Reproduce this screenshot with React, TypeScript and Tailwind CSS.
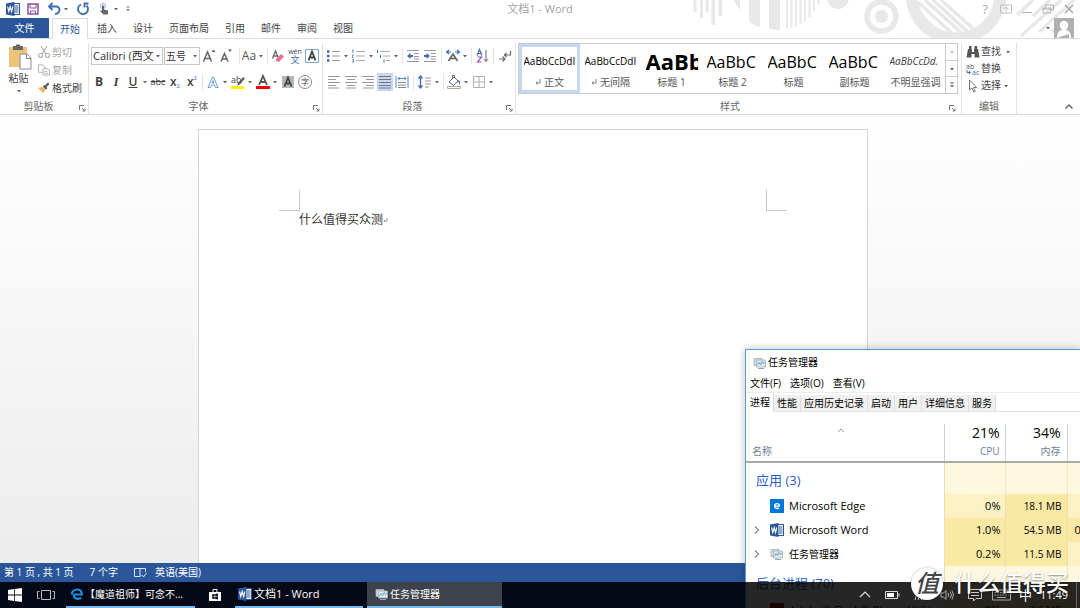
import type { ReactNode } from "react";
import clsx from "clsx";

const menuTabs = ["插入", "设计", "页面布局", "引用", "邮件", "审阅", "视图"];

const styleItems = [
  { name: "正文", sample: "AaBbCcDdI", mark: true, selected: true, look: "text-[10px] text-black" },
  { name: "无间隔", sample: "AaBbCcDdI", mark: true, look: "text-[10px] text-black" },
  { name: "标题 1", sample: "AaBb", look: "text-[22px] font-bold text-black" },
  { name: "标题 2", sample: "AaBbC", look: "text-base text-black" },
  { name: "标题", sample: "AaBbC", look: "text-base text-black" },
  { name: "副标题", sample: "AaBbC", look: "text-base text-black" },
  { name: "不明显强调", sample: "AaBbCcDd.", look: "text-[10px] italic text-[#404040]" },
];

const taskTabs = ["进程", "性能", "应用历史记录", "启动", "用户", "详细信息", "服务"];

const processes = [
  { name: "Microsoft Edge", icon: <EdgeTile />, cpu: "0%", mem: "18.1 MB", disk: "", expand: false, hot: false, diskHot: false },
  { name: "Microsoft Word", icon: <WordIcon />, cpu: "1.0%", mem: "54.5 MB", disk: "0", expand: true, hot: true, diskHot: true },
  { name: "任务管理器", cjk: true, icon: <TaskIcon />, cpu: "0.2%", mem: "11.5 MB", disk: "", expand: true, hot: true, diskHot: false },
];

function WordIcon() {
  return (
    <svg width="14" height="14" viewBox="0 0 14 14" className="shrink-0">
      <rect x="7" y="1.5" width="6.5" height="11" fill="#fff" stroke="#2b579a" />
      <path d="M9 4h3.5M9 6h3.5M9 8h3.5M9 10h3.5" stroke="#2b579a" />
      <path d="M0 1.5L8.5 0v14L0 12.5z" fill="#2b579a" />
      <path d="M1.6 4.5l1.2 5 1.4-5 1.4 5 1.2-5" fill="none" stroke="#fff" strokeWidth="1.1" />
    </svg>
  );
}

function TaskIcon() {
  return (
    <svg width="13" height="12" viewBox="0 0 13 12" className="shrink-0">
      <path d="M1 1.5h8v7H1z" fill="#d5dade" stroke="#a3abb0" strokeWidth=".8" />
      <path d="M3.5 3h9v7h-9z" fill="#dcebf5" stroke="#a3abb0" strokeWidth=".8" />
      <path d="M4.5 8l1.5-2.5 1.5 2 1.7-3 1.3 2 1.3-1" fill="none" stroke="#5a9fcb" strokeWidth="1" />
      <path d="M5 11.5h6" stroke="#9aa3a8" />
    </svg>
  );
}

function EdgeTile() {
  return (
    <svg width="14" height="14" viewBox="0 0 14 14" className="shrink-0">
      <rect width="14" height="14" fill="#0078d7" />
      <path d="M4.8 7.1h4.600C9.400 5.400 8.400 4.600 7.100 4.600 5.700 4.600 4.600 5.600 4.600 7.100c0 1.600 1.100 2.400 2.600 2.400.8 0 1.400-.2 2-.5" fill="none" stroke="#fff" strokeWidth="1.300" />
    </svg>
  );
}

function Arrow({ className }: { className?: string }) {
  return (
    <svg width="8" height="6" viewBox="0 0 8 6" className={clsx("shrink-0", className)}>
      <path d="M2 2h4L4 4.500z" fill="#666" />
    </svg>
  );
}

function Icon({ children }: { children: ReactNode }) {
  return (
    <svg width="16" height="16" viewBox="0 0 16 16" fill="none" stroke="#666" className="shrink-0">
      {children}
    </svg>
  );
}

function Tool({ label, drop, active, children }: { label: string; drop?: boolean; active?: boolean; children: ReactNode }) {
  return (
    <button
      type="button"
      aria-label={label}
      className={clsx("flex h-[18px] shrink-0 items-center justify-center", drop ? "w-6" : "w-4", active && "bg-[#c5d7f2]")}
    >
      <span className="flex w-4 shrink-0 items-center justify-center">{children}</span>
      {drop && <Arrow />}
    </button>
  );
}

function Sep({ className }: { className?: string }) {
  return <span className={clsx("h-4 w-px shrink-0 bg-[#e4e4e4]", className ?? "mx-px")} />;
}

function Group({ title, className, launcher, children }: { title: string; className?: string; launcher?: boolean; children: ReactNode }) {
  return (
    <section className={clsx("flex shrink-0 flex-col border-r border-[#e2e2e2]", className)}>
      <div className="h-[54px]">{children}</div>
      <div
        className={clsx(
          "relative flex h-[17px] items-end justify-center text-[10px] leading-[15px] text-[#666]",
          launcher ? "pr-4" : "pr-1"
        )}
      >
        {title}
        {launcher && (
          <button type="button" aria-label={`${title}设置`} className="absolute right-0.5 bottom-0.5">
            <svg width="7" height="7" viewBox="0 0 7 7" fill="none" stroke="#777">
              <path d="M.5 5V.5H5M3 3l2.500 2.500M6 3.500V6H3.500" />
            </svg>
          </button>
        )}
      </div>
    </section>
  );
}

function TopArt() {
  return (
    <svg className="pointer-events-none absolute top-0 right-0" width="390" height="39" viewBox="690 0 390 39" fill="#e8e8e8">
      <path d="M693.500 0h3v12h-3zM700 0h3v18h-3zM705.500 0h3v12h-3zM711.500 0h3.500v25h-3.500zM718.500 0h3.500v16h-3.500z" />
      <path d="M734 0h6v10q-4-4-6-10zM749 0h11v27q-8-2-11-6zM769 0h11v30q-7 0-11-2z" />
      <path d="M786 0h2v28.500h-2zM790.500 0h2v28h-2zM795 0h2v26.500h-2zM799.500 0h2v24.500h-2zM804 0h2v21h-2zM808.500 0h2v17h-2zM813 0h2v11h-2zM817.500 0h2v4h-2z" />
      <circle cx="838" cy="-2" r="11" />
      <circle cx="881.500" cy="16.500" r="14.500" fill="none" stroke="#e8e8e8" strokeWidth="5.500" />
      <circle cx="881.500" cy="16.500" r="6.500" />
      <circle cx="956" cy="-6" r="44.500" fill="none" stroke="#e8e8e8" strokeWidth="12" />
      <path d="M918 2l40 37M925 0l40 36M933 0l37 34M941 0l36 32M917 12l27 25" fill="none" stroke="#e8e8e8" strokeWidth="3.500" />
      <path d="M1017 15l16-15M1021 36l40-36M1033 16l17-16M1039 32l35-32M1052 32l12-11" fill="none" stroke="#e8e8e8" strokeWidth="3.500" />
    </svg>
  );
}

function TitleBar() {
  return (
    <div className="relative flex h-[18px] items-center justify-between pr-[3px]">
      <div className="flex items-center gap-[5px] pl-1.5">
        <WordIcon />
        <Tool label="保存">
          <Icon>
            <path d="M3 3h10v10H3z" stroke="#8a4fa3" strokeWidth="1.500" />
            <path d="M5 3v4h6V3M5.500 13v-3h5v3" stroke="#8a4fa3" />
          </Icon>
        </Tool>
        <Tool label="撤消" drop>
          <Icon>
            <path d="M6.500 2L3 5.500 6.500 9M3 5.500h7c5 0 4.500 7-1 7.500" stroke="#3a6db5" strokeWidth="1.800" />
          </Icon>
        </Tool>
        <Tool label="恢复">
          <Icon>
            <path d="M6 3.500A5 5 0 1 0 11.500 4.500M13.500 2.500h-4v4" stroke="#3a6db5" strokeWidth="1.800" />
          </Icon>
        </Tool>
        <div className="flex items-center gap-1">
          <Tool label="触摸模式" drop>
            <Icon>
              <circle cx="7" cy="5" r="2.500" stroke="#8ab0de" />
              <path d="M6 4.500h2v4l4 1v4H7.500L4 10l2-.500z" fill="#666" stroke="none" />
            </Icon>
          </Tool>
          <button type="button" aria-label="自定义快速访问工具栏">
            <svg width="8" height="8" viewBox="0 0 8 8">
              <path d="M2 2h4" stroke="#888" />
              <path d="M2 4h4L4 6.500z" fill="#888" />
            </svg>
          </button>
        </div>
      </div>
      <h1 className="absolute inset-x-0 text-center text-[11px] leading-[18px] text-[#a3a3a3]">文档1 - Word</h1>
      <div className="relative flex items-center gap-[5px] text-[#a8a8a8]">
        <button type="button" className="w-4 text-[13px] leading-4">?</button>
        <button type="button" aria-label="功能区显示选项">
          <Icon>
            <path d="M2.500 4h11v8h-11zM8 11V6.500M5.500 8.500L8 6l2.500 2.500" stroke="#c0c0c0" />
          </Icon>
        </button>
        <button type="button" aria-label="最小化">
          <Icon><path d="M3 11.500h10" stroke="#b0b0b0" /></Icon>
        </button>
        <button type="button" aria-label="还原">
          <Icon><path d="M5.500 6V4h8v5H11M3 7h8v5H3zM3 8h8" stroke="#b0b0b0" /></Icon>
        </button>
        <button type="button" aria-label="关闭">
          <Icon><path d="M4 4l8 8M12 4l-8 8" stroke="#a8a8a8" strokeWidth="1.500" /></Icon>
        </button>
      </div>
    </div>
  );
}

function MenuTabs() {
  return (
    <nav className="relative flex h-[21px] items-stretch gap-px border-b border-[#dcdcdc] text-[10px] text-[#444]">
      <button type="button" className="w-[49px] bg-[#2b579a] text-white">文件</button>
      <button type="button" className="-mb-px ml-0.5 border border-b-0 border-[#dcdcdc] bg-white px-[7px] text-[#2b579a]">开始</button>
      <div className="flex">
        {menuTabs.map((tab) => (
          <button key={tab} type="button" className="px-2">{tab}</button>
        ))}
      </div>
      <button type="button" aria-label="帐户" className="mr-1.5 ml-auto flex items-center gap-0.5">
        <Arrow />
        <svg width="20" height="20" viewBox="0 0 20 20">
          <rect width="20" height="20" fill="#b0b0b0" />
          <path d="M10 3c3 0 4.200 2 4.200 4.500S12.500 12 10 12 5.800 10 5.800 7.500 7 3 10 3z" fill="#fff" />
          <path d="M3 20c0-5 2-7.500 5-8h4c3 .5 5 3 5 8h-2v-4M5 20v-4" fill="#fff" />
        </svg>
      </button>
    </nav>
  );
}

function Clipboard() {
  return (
    <Group title="剪贴板" launcher className="w-[89px] pl-[5px]">
      <div className="flex gap-1.5 text-[10px] leading-[18px]">
        <button type="button" className="flex w-[27px] flex-col items-center text-[#444]">
          <svg width="26" height="27" viewBox="0 0 26 27">
            <rect x="3" y="4" width="18" height="20" fill="#ecc57b" />
            <path d="M7 3h3V1.500h4V3h3v4H7z" fill="#666" />
            <path d="M14 11h7l4 4v11H14z" fill="#fff" stroke="#8a8a8a" />
            <path d="M20.500 11v4.500H25" fill="none" stroke="#8a8a8a" />
          </svg>
          <span className="leading-4">粘贴</span>
          <Arrow className="mt-0.5" />
        </button>
        <div className="flex flex-col text-[#a6a6a6]">
          <button type="button" className="flex h-[18px] items-center gap-0.5">
            <svg width="12" height="14" viewBox="1 0 12 14" fill="none" stroke="#adadad" strokeWidth="1.200">
              <path d="M4 1l5 8M10 1L5 9" />
              <circle cx="3.500" cy="10.500" r="2" />
              <circle cx="10.500" cy="10.500" r="2" />
            </svg>
            剪切
          </button>
          <button type="button" className="flex h-[18px] items-center gap-0.5">
            <svg width="12" height="14" viewBox="0 0 13 14" fill="#fff" stroke="#adadad">
              <path d="M.5 1.500h5l2 2v6h-7z" />
              <path d="M5.500 5.500h5l2 2v5h-7zM7 8.500h3M7 10.500h4" />
            </svg>
            复制
          </button>
          <button type="button" className="flex h-[18px] items-center gap-0.5 text-[#444]">
            <svg width="12" height="14" viewBox="0 0 14 14">
              <path d="M0 7l5-1.500L8.500 9 6 13z" fill="#ecb561" />
              <path d="M5.500 5l2-1.500L11 7 9 9z" fill="#555" />
              <path d="M9 5l3.500-3.500" stroke="#555" strokeWidth="2.500" />
            </svg>
            格式刷
          </button>
        </div>
      </div>
    </Group>
  );
}

function FontGroup() {
  return (
    <Group title="字体" launcher className="w-[234px] pl-0.5">
      <div className="flex h-[26px] items-center gap-px">
        <span className="relative flex w-[72px] items-center border border-[#c6c6c6]">
          <select aria-label="字体" className="h-4 w-full appearance-none overflow-hidden bg-white pl-px text-[11px] leading-4 text-[#333]">
            <option>Calibri (西文正文)</option>
          </select>
          <Arrow className="pointer-events-none absolute right-0 h-3.5 bg-white" />
        </span>
        <span className="relative flex w-9 items-center border border-[#c6c6c6]">
          <select aria-label="字号" className="h-4 w-full appearance-none bg-white pl-px text-[10px] leading-4 text-[#333]">
            <option>五号</option>
          </select>
          <Arrow className="pointer-events-none absolute right-0" />
        </span>
        <Tool label="增大字号">
          <Icon>
            <path d="M2.500 13.500L6.500 4l4 9.500M4 10.500h5" strokeWidth="1.600" />
            <path d="M10.500 4h4L12.500 1.500z" fill="#3a6db5" stroke="none" />
          </Icon>
        </Tool>
        <Tool label="减小字号">
          <Icon>
            <path d="M3 13.500L6.500 5.500l3.500 8M4 11h5" strokeWidth="1.500" />
            <path d="M10 1.500h4L12 4z" fill="#3a6db5" stroke="none" />
          </Icon>
        </Tool>
        <Sep className="ml-1" />
        <Tool label="更改大小写" drop><span className="text-xs text-[#555]">Aa</span></Tool>
        <Sep />
        <Tool label="清除格式">
          <Icon>
            <path d="M2.500 10.500L5.500 3l3 7M3.500 8h4" strokeWidth="1.300" />
            <path d="M6 11l5-5 3 2.500-5 5.500-3-1z" fill="#e8718a" stroke="none" />
          </Icon>
        </Tool>
        <Tool label="拼音指南">
          <span className="flex flex-col items-center text-[9px] leading-[9px] text-[#444]">
            <span className="text-[7px] leading-[7px]">wén</span>
            <span className="text-[#3a6db5]">文</span>
          </span>
        </Tool>
        <Tool label="字符边框">
          <Icon>
            <path d="M1.500 1.500h13v13h-13z" stroke="#7fa6d8" />
            <path d="M4.500 12.500L8 3.500l3.500 9M5.500 9.500h5" stroke="#444" strokeWidth="1.800" />
          </Icon>
        </Tool>
      </div>
      <div className="flex h-[26px] items-center gap-px text-[#444]">
        <Tool label="加粗"><span className="text-xs font-bold">B</span></Tool>
        <Tool label="倾斜"><span className="font-['Liberation_Serif',serif] text-[13px] font-bold italic">I</span></Tool>
        <Tool label="下划线" drop><span className="text-xs font-semibold underline">U</span></Tool>
        <Tool label="删除线"><span className="text-[9px] line-through">abc</span></Tool>
        <Tool label="下标">
          <span className="text-xs font-semibold">x</span>
          <span className="self-end text-[6px] leading-[8px] text-[#3a6db5]">2</span>
        </Tool>
        <Tool label="上标">
          <span className="text-xs font-semibold">x</span>
          <span className="self-start text-[6px] leading-[8px] text-[#3a6db5]">2</span>
        </Tool>
        <Sep />
        <Tool label="文本效果" drop>
          <Icon>
            <path d="M3 13.500L7.500 3h1L13 13.500h-2.500l-1-2.500h-3l-1 2.500zM7 9h2L8 6.500z" stroke="#6f9fd8" />
          </Icon>
        </Tool>
        <Tool label="突出显示" drop>
          <svg width="16" height="16" viewBox="0 0 16 16">
            <path d="M8 9l5-6 2 1.500-5 6-3 1z" fill="#666" />
            <text x="1" y="9" fontSize="9" fill="#444">ab</text>
            <path d="M1 12h13v3H1z" fill="#ffef00" />
          </svg>
        </Tool>
        <Tool label="字体颜色" drop>
          <Icon>
            <path d="M4 11L8 2l4 9M5.500 8h5" stroke="#555" strokeWidth="1.800" />
            <path d="M1 12h14v3H1z" fill="#f00000" stroke="none" />
          </Icon>
        </Tool>
        <Tool label="字符底纹">
          <Icon>
            <path d="M2 2h12v12H2z" fill="#b5b5b5" stroke="none" />
            <path d="M4.500 12.500L8 3.500l3.500 9M5.500 9.500h5" stroke="#444" strokeWidth="1.800" />
          </Icon>
        </Tool>
        <Tool label="带圈字符">
          <span className="flex h-3.5 w-3.5 shrink-0 items-center justify-center rounded-full border border-[#888] text-[8px] leading-none">字</span>
        </Tool>
      </div>
    </Group>
  );
}

function ParagraphGroup() {
  return (
    <Group title="段落" launcher className="w-[193px] pl-[3px]">
      <div className="flex h-[26px] items-center gap-px">
        <Tool label="项目符号" drop>
          <Icon>
            <path d="M1 3.500h2.500M1 8h2.500M1 12.500h2.500" stroke="#3a6db5" strokeWidth="2.500" />
            <path d="M6 3.500h8M6 8h8M6 12.500h8" stroke="#999" />
          </Icon>
        </Tool>
        <Tool label="编号" drop>
          <Icon>
            <path d="M1 2.500l1-.5v3M1 7h1.500L1 9.500h1.500M1 11.500h1.500V14H1" stroke="#3a6db5" strokeWidth=".8" />
            <path d="M5 3.500h9M5 8h9M5 12.500h9" stroke="#aaa" />
          </Icon>
        </Tool>
        <Tool label="多级列表" drop>
          <Icon>
            <path d="M1.500 2v3M4.500 7v3M8 11.500v3" stroke="#3a6db5" />
            <path d="M4 3.500h10M7 8h7M10 12.500h4" stroke="#aaa" />
          </Icon>
        </Tool>
        <Sep />
        <Tool label="减少缩进">
          <Icon>
            <path d="M2 2.500h12M9 5.500h5M9 8.500h5M2 13.500h12M9 11h5" stroke="#999" />
            <path d="M2 8l3.500-3v2H8v2H5.500v2z" fill="#3a6db5" stroke="none" />
          </Icon>
        </Tool>
        <Tool label="增加缩进">
          <Icon>
            <path d="M2 2.500h12M9 5.500h5M9 8.500h5M2 13.500h12M9 11h5" stroke="#999" />
            <path d="M8 8L4.500 5v2H2v2h2.500v2z" fill="#3a6db5" stroke="none" />
          </Icon>
        </Tool>
        <Sep className="mx-0.5" />
        <Tool label="中文版式" drop>
          <Icon>
            <path d="M3.500 13L8 6l4.500 7M5 10.500h6" strokeWidth="1.600" />
            <path d="M1.500 4H6M4 2L1.500 4 4 6M14.500 4H10M12 2l2.500 2L12 6" stroke="#3a6db5" strokeWidth="1.200" />
          </Icon>
        </Tool>
        <Sep />
        <Tool label="排序">
          <Icon>
            <path d="M3 7.500L5.500 1.500l2.500 6M4 5.500h3" stroke="#3a6db5" strokeWidth="1.200" />
            <path d="M3.500 9h4l-4 5h4" stroke="#8a4fa3" strokeWidth="1.200" />
            <path d="M12 2v11.500M9.800 11l2.200 2.500 2.200-2.500" />
          </Icon>
        </Tool>
        <Sep className="mx-0.5" />
        <Tool label="显示编辑标记">
          <Icon>
            <path d="M13.500 3v4H7.500M9.500 5l-2 2 2 2M2 11h6M5.500 8.500L8 11l-2.500 2.500" strokeWidth="1.200" />
          </Icon>
        </Tool>
      </div>
      <div className="flex h-[26px] items-center gap-px">
        <Tool label="左对齐">
          <Icon><path d="M2 2.500h12M2 5.500h8M2 8.500h12M2 11.500h8M2 14h11" stroke="#999" /></Icon>
        </Tool>
        <Tool label="居中">
          <Icon><path d="M2 2.500h12M4 5.500h8M2 8.500h12M4 11.500h8M3 14h10" stroke="#999" /></Icon>
        </Tool>
        <Tool label="右对齐">
          <Icon><path d="M2 2.500h12M6 5.500h8M2 8.500h12M6 11.500h8M3 14h11" stroke="#999" /></Icon>
        </Tool>
        <Tool label="两端对齐" active>
          <Icon><path d="M2 2.500h12M2 5.500h12M2 8.500h12M2 11.500h12M2 14h12" stroke="#777" /></Icon>
        </Tool>
        <Tool label="分散对齐">
          <Icon>
            <path d="M4 8.500h8M4 11h8M4 13.500h8" stroke="#888" />
            <path d="M2 2v12M14 2v12M4 4.500h8M6 2.500l-2 2 2 2M10 2.500l2 2-2 2" stroke="#5b8ac7" />
          </Icon>
        </Tool>
        <Sep className="mx-0.5" />
        <Tool label="行距" drop>
          <Icon>
            <path d="M3.500 2v12M1.500 4.500l2-2.500 2 2.500M1.500 11.500l2 2.500 2-2.500" stroke="#3a6db5" strokeWidth="1.300" />
            <path d="M8 4h6M8 7h6M8 10h6M8 13h4" stroke="#999" />
          </Icon>
        </Tool>
        <Sep />
        <Tool label="底纹" drop>
          <Icon>
            <path d="M3 8l5-5 4 4-4.500 4.500zM6.500 5V1.500h2V4" />
            <path d="M12 6c2 .5 2.500 2 2 4.500-1-.5-1.500-2-2-4.500z" fill="#3a6db5" stroke="none" />
            <path d="M1.500 12.500h13v2h-13z" fill="#fff" stroke="#aaa" />
          </Icon>
        </Tool>
        <Tool label="边框" drop>
          <Icon><path d="M2.500 2.500h11v11h-11zM8 2.500v11M2.500 8h11" stroke="#b0b0b0" /></Icon>
        </Tool>
      </div>
    </Group>
  );
}

function StylesGroup() {
  return (
    <Group title="样式" launcher className="min-w-0 flex-1 pr-[3px] pl-0.5">
      <div className="flex h-[51px] border border-[#c9c9c9] bg-white">
        <div className="flex min-w-0 flex-1 overflow-hidden">
          {styleItems.map((item) => (
            <button
              key={item.name}
              type="button"
              className={clsx(
                "flex w-[61px] shrink-0 flex-col items-center border-[3px]",
                item.selected ? "border-[#c5d7f2]" : "border-transparent"
              )}
            >
              <span className={clsx("flex h-[29px] w-[52px] items-center overflow-hidden whitespace-nowrap", item.look)}>
                {item.sample}
              </span>
              <span className="flex h-3 items-center gap-[3px] text-[10px] leading-3 whitespace-nowrap text-[#555]">
                {item.mark && (
                  <svg width="6" height="6" viewBox="0 0 6 6" fill="none" stroke="#666">
                    <path d="M5 0v4H1M2.500 2.500L1 4l1.500 1.500" strokeWidth=".8" />
                  </svg>
                )}
                {item.name}
              </span>
            </button>
          ))}
        </div>
        <div className="flex w-3 flex-col divide-y divide-[#c9c9c9] border-l border-[#c9c9c9]">
          <button type="button" aria-label="上一行" className="flex flex-1 items-center justify-center">
            <Arrow className="rotate-180 opacity-50" />
          </button>
          <button type="button" aria-label="下一行" className="flex flex-1 items-center justify-center"><Arrow /></button>
          <button type="button" aria-label="其他" className="flex flex-1 items-center justify-center">
            <svg width="8" height="8" viewBox="0 0 8 8">
              <path d="M2 2h4" stroke="#666" />
              <path d="M2 4h4L4 6.500z" fill="#666" />
            </svg>
          </button>
        </div>
      </div>
    </Group>
  );
}

function EditGroup() {
  return (
    <Group title="编辑" className="w-[55px] pl-1">
      <div className="flex flex-col text-[10px] leading-[17px] text-[#444]">
        <button type="button" className="flex h-[17px] items-center gap-px">
          <svg width="14" height="14" viewBox="0 0 14 14" fill="#555">
            <path d="M3 1h2.500v3H3zM8.500 1H11v3H8.500zM2 4h4v3h2V4h4l1.500 8.500H8.500V9h-3v3.500H.5z" />
          </svg>
          查找
          <Arrow className="ml-0.5" />
        </button>
        <button type="button" className="flex h-[17px] items-center gap-px">
          <svg width="14" height="14" viewBox="0 0 14 14">
            <text x="0" y="7" fontSize="7" fill="#555">ab</text>
            <text x="6" y="13" fontSize="7" fill="#3a6db5">ac</text>
            <path d="M1 8v2.500h3M3 9l1.500 1.500L3 12" fill="none" stroke="#3a6db5" />
          </svg>
          替换
        </button>
        <button type="button" className="flex h-[17px] items-center gap-px">
          <svg width="14" height="14" viewBox="0 0 14 14">
            <path d="M3.500 1v10l2.500-2 1.800 4 1.500-.7-1.800-3.800h3.200z" fill="#fff" stroke="#777" />
          </svg>
          选择
          <Arrow />
        </button>
      </div>
    </Group>
  );
}

function TaskManager() {
  return (
    <aside className="absolute top-[349px] right-0 bottom-0 w-[335px] overflow-hidden border-t border-l border-[#5a9bd0] bg-white text-black shadow-[0_0_8px_rgba(0,0,0,0.25)]">
      <h2 className="flex h-[25px] items-center gap-0.5 pl-[7px] text-[10px]">
        <TaskIcon />
        任务管理器
      </h2>
      <div className="flex h-[18px] items-center gap-[9px] border-b border-[#ededed] pl-1 text-[10px]">
        <button type="button">文件(F)</button>
        <button type="button">选项(O)</button>
        <button type="button">查看(V)</button>
      </div>
      <div className="flex h-[19px] border-b border-[#e3e3e3] text-[10px]">
        {taskTabs.map((tab, i) => (
          <button
            key={tab}
            type="button"
            className={clsx("border-r border-[#dedede] px-[3px]", i === 0 ? "-mb-px bg-white pl-1" : "mt-0.5 bg-[#f0f0f0]")}
          >
            {tab}
          </button>
        ))}
      </div>
      <table className="mt-3 w-full table-fixed border-collapse text-[11px]">
        <thead>
          <tr className="h-[38px] border-b-2 border-[#a9a9a9] font-normal text-[#6d7f95]">
            <th className="relative w-[198px] border-r border-[#d0d0d0] pl-1.5 text-left align-bottom text-[10px] font-normal">
              <svg width="8" height="5" viewBox="0 0 8 5" fill="none" stroke="#999" className="absolute top-1 right-1/2">
                <path d="M1 4l3-3 3 3" />
              </svg>
              <span className="leading-5">名称</span>
            </th>
            <th className="w-[61px] border-r border-[#d0d0d0] pr-[5px] text-right align-bottom font-normal">
              <span className="block text-sm leading-[17px] text-black">21%</span>
              <span className="block text-[10px] leading-5">CPU</span>
            </th>
            <th className="w-[62px] border-r border-[#d0d0d0] pr-1.5 text-right align-bottom font-normal">
              <span className="block text-sm leading-[17px] text-black">34%</span>
              <span className="block text-[10px] leading-5">内存</span>
            </th>
            <th />
          </tr>
        </thead>
        <tbody>
          <GroupRow title="应用 (3)" />
          {processes.map((p) => (
            <tr key={p.name} className="h-6">
              <td className="border-r border-[#eedfa6]">
                <div className="flex items-center gap-[5px] pl-[7px]">
                  <svg width="12" height="10" viewBox="0 0 12 10" fill="none" stroke="#888">
                    {p.expand && <path d="M2 1.500L5.500 5 2 8.500" strokeWidth="1.200" />}
                  </svg>
                  <span className="w-3.5">{p.icon}</span>
                  <span className={p.cjk ? "text-[10px]" : undefined}>{p.name}</span>
                </div>
              </td>
              <td className={clsx("border-r border-[#eedfa6] pr-1 text-right", p.hot ? "bg-[#f9e9a5]" : "bg-[#fdf1c3]")}>{p.cpu}</td>
              <td className="border-r border-[#eedfa6] bg-[#f9e9a5] pr-[5px] text-right text-[10px]">{p.mem}</td>
              <td className={clsx("pl-[7px]", p.diskHot ? "bg-[#f9e9a5]" : "bg-[#fdf1c3]")}>{p.disk}</td>
            </tr>
          ))}
          <GroupRow title="后台进程 (70)" />
          <tr className="h-6">
            <td className="border-r border-[#eedfa6]">
              <div className="flex items-center gap-[5px] pl-6">
                <span className="h-3.5 w-3.5 shrink-0 bg-[#a01010]" />
                <span className="whitespace-nowrap">Adobe® Flash® Player Utility</span>
              </div>
            </td>
            <td className="border-r border-[#eedfa6] bg-[#fdf1c3] pr-1 text-right">0%</td>
            <td className="border-r border-[#eedfa6] bg-[#fdf1c3] pr-[5px] text-right text-[10px]">3.6 MB</td>
            <td className="bg-[#fdf1c3]" />
          </tr>
        </tbody>
      </table>
    </aside>
  );
}

function GroupRow({ title }: { title: string }) {
  return (
    <tr className="h-8">
      <td className="border-r border-[#eedfa6] pt-1 pl-[10px] text-[13px] text-[#2b60c4]">{title}</td>
      <td className="border-r border-[#f3e8bf] bg-[#fff8e1]" />
      <td className="border-r border-[#f3e8bf] bg-[#fff8e1]" />
      <td className="bg-[#fff8e1]" />
    </tr>
  );
}

function Taskbar() {
  return (
    <footer className="relative flex h-[26px] shrink-0 items-stretch bg-black/85 text-[10px] text-white">
      <button type="button" aria-label="开始" className="flex w-[30px] items-center justify-center">
        <svg width="14" height="14" viewBox="0 0 14 14" fill="#fff">
          <path d="M0 2l6-.9v5.500H0zM6.800 1L14 0v6.600H6.800zM0 7.400h6v5.500L0 12zM6.800 7.400H14V14l-7.200-1z" />
        </svg>
      </button>
      <button type="button" aria-label="任务视图" className="flex w-8 items-center justify-center">
        <svg width="18" height="12" viewBox="0 0 18 12" fill="none" stroke="#bbb">
          <path d="M4.500 1.500h9v9h-9zM2.500 2.500h-2v7h2M15.500 2.500h2v7h-2" />
        </svg>
      </button>
      <button type="button" className="ml-1 flex w-[129px] items-center gap-0.5 border-b-2 border-[#76b9ed] pl-[5px]">
        <svg width="12" height="12" viewBox="0 0 12 12" fill="none" stroke="#1a8fe3" strokeWidth="2.200">
          <path d="M2.500 6.500h8.300C10.800 3.500 9 1.500 6.300 1.500 3.500 1.500 1 3.500.8 6.500M2.800 6.500c0 3 2 4.300 4 4.300 1.300 0 2.400-.3 3.400-.9" />
        </svg>
        【魔道祖师】可念不...
      </button>
      <button type="button" aria-label="应用商店" className="flex w-10 items-center justify-center">
        <svg width="12" height="14" viewBox="0 0 12 14">
          <path d="M4 4V1.500h4V4" fill="none" stroke="#fff" />
          <path d="M0 4h12v9H0z" fill="#fff" />
          <path d="M3 6.500l2.700-.5v2.300H3zM6.200 6L9 5.500v2.800H6.200zM3 8.800h2.700V11L3 10.600zM6.200 8.800H9v2.700L6.200 11z" fill="#0a0f1a" />
        </svg>
      </button>
      <button type="button" className="flex w-32 items-center gap-0.5 border-b-2 border-[#76b9ed] pl-[3px] text-[11px]">
        <WordIcon />
        文档1 - Word
      </button>
      <button type="button" className="ml-1 flex w-[135px] items-center gap-0.5 border-b-2 border-[#76b9ed] bg-[#3e424c] pl-2">
        <TaskIcon />
        任务管理器
      </button>
      <div className="ml-auto flex items-center gap-2.5 pr-[3px]">
        <div className="flex items-center gap-3.5">
          <button type="button" aria-label="显示隐藏的图标">
            <svg width="12" height="12" viewBox="0 0 12 12" fill="none" stroke="#ddd">
              <path d="M1 8l5-5 5 5" strokeWidth="1.200" />
            </svg>
          </button>
          <svg width="15" height="12" viewBox="0 0 15 12" fill="none" stroke="#ddd">
            <path d="M.5 2.500h12v7H.5zM14 4.500v3" />
            <path d="M2 4h7v4H2z" fill="#fff" stroke="none" />
          </svg>
          <svg width="12" height="12" viewBox="0 0 12 12" fill="none" stroke="#ccc">
            <path d="M1 11Q2 3 11 1M4 11q1-5 7-7M7 11q1-3 4-4M9.500 11l1.500-1.500" />
          </svg>
          <svg width="14" height="12" viewBox="0 0 14 12" fill="none" stroke="#aaa">
            <path d="M1 4h2.500L6 1.500v9L3.500 8H1zM8 4q1.500 2 0 4M10 2.500q3 3.500 0 7M12 1.500q3 4.500 0 9" />
          </svg>
          <svg width="14" height="14" viewBox="0 0 14 14" fill="none" stroke="#ccc">
            <path d="M.5 1.500h13v9H8L5.500 13v-2.500h-5zM3 4.500h8M3 7.500h8" />
          </svg>
        </div>
        <div className="flex h-full items-center gap-2">
          <svg width="19" height="12" viewBox="0 0 19 12" fill="none" stroke="#aaa">
            <path d="M.5 1h18v10H.5zM5 8.500h9" />
            <path d="M2.500 3.500h14M2.500 6h14" strokeDasharray="1.500 1.200" />
          </svg>
          <span className="text-[13px] leading-none">中</span>
          <time className="text-[11px]">11:49</time>
          <span className="h-full w-px bg-[#666]" />
        </div>
      </div>
    </footer>
  );
}

function Watermark() {
  return (
    <div className="pointer-events-none absolute right-[11px] bottom-1.5 flex items-center gap-[11px] text-white">
      <span className="flex h-8 w-8 items-center justify-center rounded-full bg-white font-['Liberation_Serif','Noto_Sans_CJK_SC',serif] text-2xl leading-none font-medium text-[#444] italic shadow-[0_0_3px_rgba(0,0,0,0.3)]">
        值
      </span>
      <span className="pb-1 text-[23px] leading-8 font-medium [text-shadow:0_1px_2px_rgba(0,0,0,0.45)]">什么值得买</span>
    </div>
  );
}

export default function App() {
  return (
    <div className="relative flex h-screen flex-col overflow-hidden bg-[#21408f] font-['Open_Sans','Noto_Sans_CJK_SC',sans-serif]">
      <header className="relative shrink-0 bg-white">
        <TopArt />
        <TitleBar />
        <MenuTabs />
        <div className="flex h-[76px] border-b border-[#d9d9d9] bg-white pt-1">
          <Clipboard />
          <FontGroup />
          <ParagraphGroup />
          <StylesGroup />
          <EditGroup />
          <button type="button" aria-label="折叠功能区" className="flex w-[63px] items-end justify-end pr-1.5 pb-1">
            <svg width="10" height="7" viewBox="0 0 10 7" fill="none" stroke="#666">
              <path d="M1.500 5.500L5 2l3.500 3.500" strokeWidth="1.500" />
            </svg>
          </button>
        </div>
      </header>

      <main className="flex min-h-0 flex-1 justify-center bg-linear-to-b from-white to-[#ececec] pt-3.5 pr-3.5">
        <article className="w-[670px] border border-b-0 border-[#d4d4d4] bg-white pt-[60px]">
          <div className="flex justify-between px-20">
            <span className="h-[21px] w-[21px] border-r border-b border-[#c8c8c8]" />
            <span className="h-[21px] w-[21px] border-b border-l border-[#c8c8c8]" />
          </div>
          <p className="flex items-center px-[100px] font-['Liberation_Serif','Noto_Sans_CJK_SC',serif] text-xs leading-[18px] text-[#333]">
            什么值得买众测
            <svg width="5" height="6" viewBox="0 0 5 6" fill="none" stroke="#777">
              <path d="M4 1v3H1M2 3L1 4l1 1" strokeWidth=".7" />
            </svg>
          </p>
        </article>
      </main>

      <div className="flex h-[19px] shrink-0 items-center gap-4 bg-[#2b579a] px-1 text-[10px] text-white">
        <span>第 1 页 , 共 1 页</span>
        <span>7 个字</span>
        <div className="flex items-center gap-2">
          <svg width="13" height="11" viewBox="0 0 13 11" fill="none" stroke="#dce6f5">
            <path d="M6 1.500H.5v8H6zM6 1.500h5.500V5M6 9.500l1-1M8 8l1.500 2L12.500 6" />
          </svg>
          <span>英语(美国)</span>
        </div>
      </div>

      <TaskManager />
      <Taskbar />
      <Watermark />
    </div>
  );
}
